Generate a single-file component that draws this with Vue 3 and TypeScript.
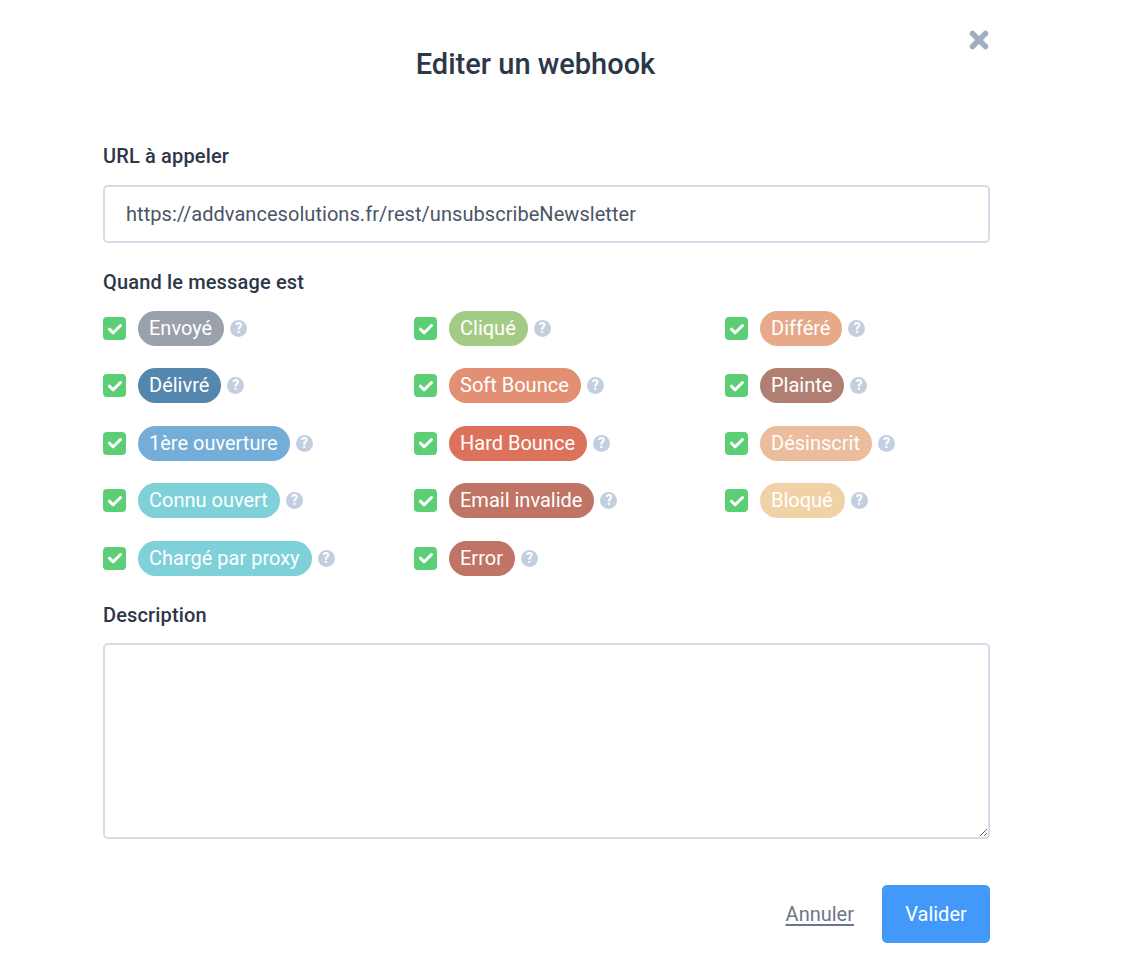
<template>
  <div class="modal">
    <button class="close" type="button" aria-label="Fermer">
      <svg width="22" height="22" viewBox="0 0 22 22">
        <path d="M4.500 4.500 17.500 17.500M17.500 4.500 4.500 17.500" stroke="#a0aec0" stroke-width="5.500" stroke-linecap="round" />
      </svg>
    </button>
    <h1 class="title">Editer un webhook</h1>

    <label class="label url-label">URL à appeler</label>
    <input class="input" type="text" value="https://addvancesolutions.fr/rest/unsubscribeNewsletter" />

    <label class="label when-label">Quand le message est</label>
    <div class="events">
      <div v-for="ev in events" :key="ev.name" class="event">
        <span class="check">
          <svg width="16" height="16" viewBox="0 0 16 16">
            <path d="M2.400 8.200 6.200 11.800 13.500 4.500" fill="none" stroke="#fff" stroke-width="3" stroke-linecap="round" stroke-linejoin="round" />
          </svg>
        </span>
        <span class="chip" :style="{ background: ev.color }">{{ ev.name }}</span>
        <span class="help">?</span>
      </div>
    </div>

    <label class="label desc-label">Description</label>
    <textarea class="textarea"></textarea>

    <div class="actions">
      <a class="cancel">Annuler</a>
      <button class="submit" type="button">Valider</button>
    </div>
  </div>
</template>

<script setup lang="ts">
interface EventType {
  name: string
  color: string
}

// rempli ligne par ligne, comme dans la grille
const events: EventType[] = [
  { name: 'Envoyé', color: '#9aa1ad' },
  { name: 'Cliqué', color: '#a4cb85' },
  { name: 'Différé', color: '#e8a88a' },
  { name: 'Délivré', color: '#5487ad' },
  { name: 'Soft Bounce', color: '#e28f74' },
  { name: 'Plainte', color: '#b07f71' },
  { name: '1ère ouverture', color: '#74add8' },
  { name: 'Hard Bounce', color: '#dc725b' },
  { name: 'Désinscrit', color: '#ebbd9c' },
  { name: 'Connu ouvert', color: '#7ed0d9' },
  { name: 'Email invalide', color: '#bf7466' },
  { name: 'Bloqué', color: '#f0d2a6' },
  { name: 'Chargé par proxy', color: '#7ed0d9' },
  { name: 'Error', color: '#bf7466' },
]
</script>

<style scoped>
.modal {
  position: relative;
  box-sizing: border-box;
  width: 1130px;
  height: 974px;
  padding: 43px 140px 0 103px;
  background: #fff;
  color: #2d3748;
  font-family: Roboto, "Liberation Sans", sans-serif;
  display: flex;
  flex-direction: column;
}

.close {
  position: absolute;
  top: 29px;
  left: 968px;
  padding: 0;
  border: 0;
  background: none;
  line-height: 0;
}

.title {
  margin: 0;
  font-size: 29px;
  line-height: 42px;
  font-weight: 500;
  text-align: center;
  padding-right: 22px;
}

.label {
  font-size: 20px;
  line-height: 26px;
  font-weight: 500;
  letter-spacing: 0.150px;
}

.url-label {
  margin-top: 58px;
}

.input {
  box-sizing: border-box;
  margin-top: 16px;
  width: 887px;
  height: 58px;
  padding: 0 21px;
  border: 2px solid #d3dce8;
  border-radius: 5px;
  font: 400 20px Roboto, sans-serif;
  letter-spacing: 0.050px;
  color: #4a5568;
  outline: none;
}

.when-label {
  margin-top: 26px;
}

.events {
  margin-top: 16px;
  display: grid;
  grid-template-columns: repeat(3, 311px);
  grid-auto-rows: 57.400px;
}

.event {
  display: flex;
  align-items: center;
  height: 35px;
}

.check {
  box-sizing: border-box;
  width: 23px;
  height: 23px;
  border-radius: 4px;
  background: #5ccf76;
  display: flex;
  align-items: center;
  justify-content: center;
}

.chip {
  margin-left: 11.500px;
  height: 35px;
  padding: 0 12px 0 11.500px;
  border-radius: 18px;
  color: #fff;
  font-size: 20px;
  line-height: 35px;
  white-space: nowrap;
}

.help {
  margin-left: 6px;
  width: 17px;
  height: 17px;
  border-radius: 50%;
  background: #c3cfe0;
  color: #fff;
  font-size: 14px;
  font-weight: 700;
  line-height: 17px;
  text-align: center;
}

.desc-label {
  margin-top: 4.500px;
}

.textarea {
  box-sizing: border-box;
  display: block;
  margin-top: 15px;
  width: 887px;
  height: 196px;
  border: 2px solid #d3dce8;
  border-radius: 5px;
  outline: none;
  resize: vertical;
}

.actions {
  margin-top: 46px;
  display: flex;
  justify-content: flex-end;
  align-items: center;
  width: 887px;
}

.cancel {
  font-size: 20px;
  color: #6b7688;
  text-decoration: underline;
  text-underline-offset: 3px;
  margin-right: 28px;
}

.submit {
  width: 108px;
  height: 58px;
  border: 0;
  border-radius: 5px;
  background: #4299f9;
  color: #fff;
  font: 400 20px Roboto, sans-serif;
}
</style>
